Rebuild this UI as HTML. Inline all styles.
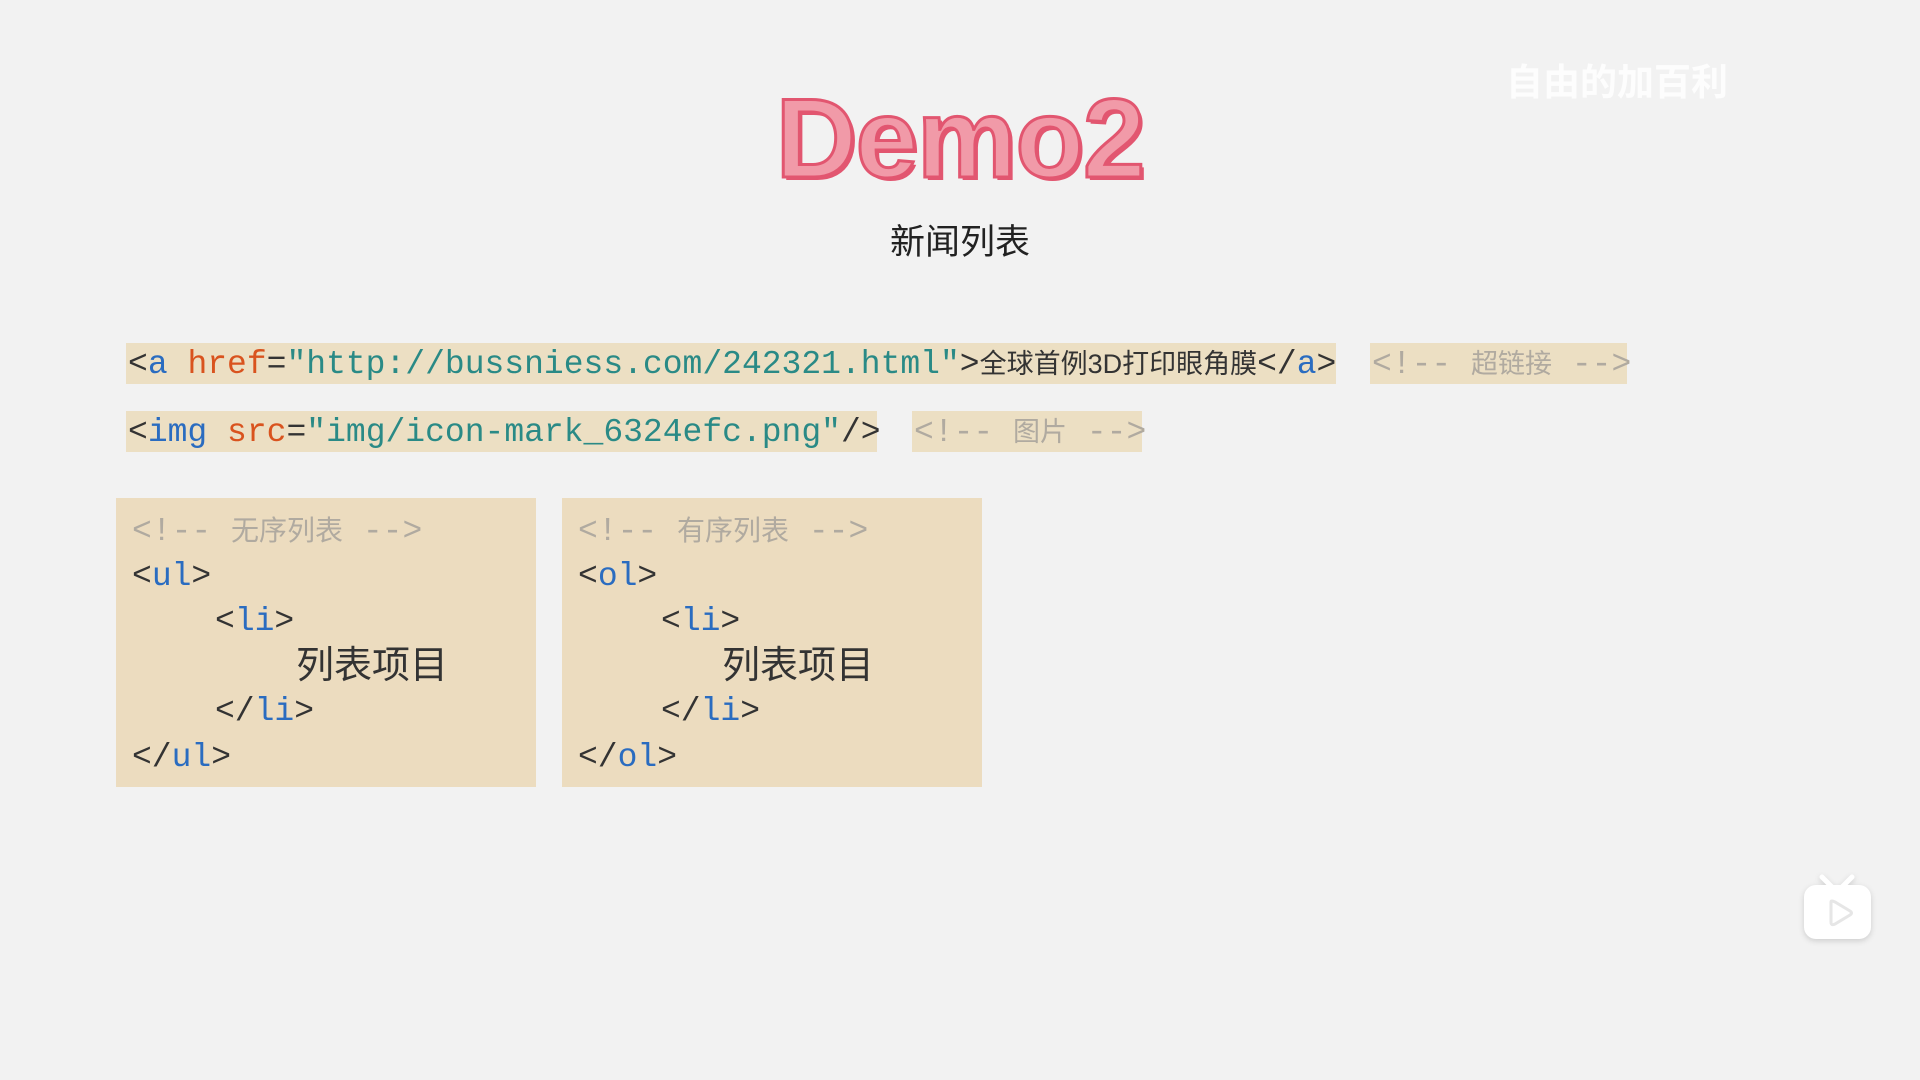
<!DOCTYPE html>
<html><head><meta charset="utf-8"><style>
body{margin:0;width:1920px;height:1080px;background:#f2f2f2;position:relative;overflow:hidden;font-family:"Liberation Sans","Noto Sans CJK SC",sans-serif}
.a{position:absolute;white-space:nowrap}
.bar{position:absolute;background:#ecdfc3;height:41px}
.m{font-family:"Liberation Mono","Noto Sans CJK SC",monospace;font-size:33px;line-height:41px;color:#333}
.b{color:#2a6cc0}.o{color:#d9531e}.t{color:#2a8a86}.c{color:#b0aaa0}
.cn{font-family:"Liberation Sans","Noto Sans CJK SC",sans-serif;font-size:27px}
.box{position:absolute;background:#ecdcbf;top:498px;height:289px;width:420px}
.box div{position:absolute;white-space:nowrap;font-family:"Liberation Mono","Noto Sans CJK SC",monospace;font-size:33px;line-height:44px;color:#333}
.box div.c{color:#b0aaa0}
</style></head><body>
<div class="a" style="left:0;width:1920px;text-align:center;top:83px;font:bold 112px/112px 'Liberation Sans',sans-serif;color:#f19aa8;-webkit-text-stroke:3px #e25670;text-shadow:3px 3px 0 #e25670;letter-spacing:-1px">Demo2</div>
<div class="a" style="left:0;width:1920px;text-align:center;top:214px;font-size:35px;color:#222">新闻列表</div>
<div class="a" style="left:1506px;top:52px;font-size:37px;font-weight:bold;color:#fff;opacity:.85">自由的加百利</div>

<div class="bar" style="left:126px;top:343px;width:1210px"></div>
<div class="a m" style="left:128px;top:344px">&lt;<span class="b">a</span> <span class="o">href</span>=<span class="t">"http://bussniess.com/242321.html"</span>&gt;<span class="cn">全球首例3D打印眼角膜</span>&lt;/<span class="b">a</span>&gt;</div>
<div class="bar" style="left:1370px;top:343px;width:257px"></div>
<div class="a m c" style="left:1372px;top:344px">&lt;!-- <span class="cn">超链接</span> --&gt;</div>

<div class="bar" style="left:126px;top:411px;width:751px"></div>
<div class="a m" style="left:128px;top:412px">&lt;<span class="b">img</span> <span class="o">src</span>=<span class="t">"img/icon-mark_6324efc.png"</span>/&gt;</div>
<div class="bar" style="left:912px;top:411px;width:230px"></div>
<div class="a m c" style="left:914px;top:412px">&lt;!-- <span class="cn">图片</span> --&gt;</div>

<div class="box" style="left:116px">
<div class="c" style="left:16px;top:11px">&lt;!-- <span class="cn" style="font-size:28px">无序列表</span> --&gt;</div>
<div style="left:16px;top:57px">&lt;<span class="b">ul</span>&gt;</div>
<div style="left:99px;top:102px">&lt;<span class="b">li</span>&gt;</div>
<div style="left:180px;top:146px;font-family:'Liberation Sans','Noto Sans CJK SC',sans-serif;font-size:38px">列表项目</div>
<div style="left:99px;top:192px">&lt;/<span class="b">li</span>&gt;</div>
<div style="left:16px;top:238px">&lt;/<span class="b">ul</span>&gt;</div>
</div>
<div class="box" style="left:562px">
<div class="c" style="left:16px;top:11px">&lt;!-- <span class="cn" style="font-size:28px">有序列表</span> --&gt;</div>
<div style="left:16px;top:57px">&lt;<span class="b">ol</span>&gt;</div>
<div style="left:99px;top:102px">&lt;<span class="b">li</span>&gt;</div>
<div style="left:160px;top:146px;font-family:'Liberation Sans','Noto Sans CJK SC',sans-serif;font-size:38px">列表项目</div>
<div style="left:99px;top:192px">&lt;/<span class="b">li</span>&gt;</div>
<div style="left:16px;top:238px">&lt;/<span class="b">ol</span>&gt;</div>
</div>

<svg class="a" style="left:1798px;top:870px;filter:drop-shadow(0 2px 3px rgba(0,0,0,.15))" width="80" height="76" viewBox="0 0 80 76">
<path d="M24 7l10 10M54 7l-10 10" stroke="#fff" stroke-width="5" stroke-linecap="round"/>
<rect x="6" y="15" width="67" height="54" rx="12" fill="#fff"/>
<path d="M33 32l0 20q0 4 4 2l15-9q3-2 0-4l-15-9q-4-2-4 0z" fill="none" stroke="#e6e6e6" stroke-width="3"/>
</svg>
</body></html>
